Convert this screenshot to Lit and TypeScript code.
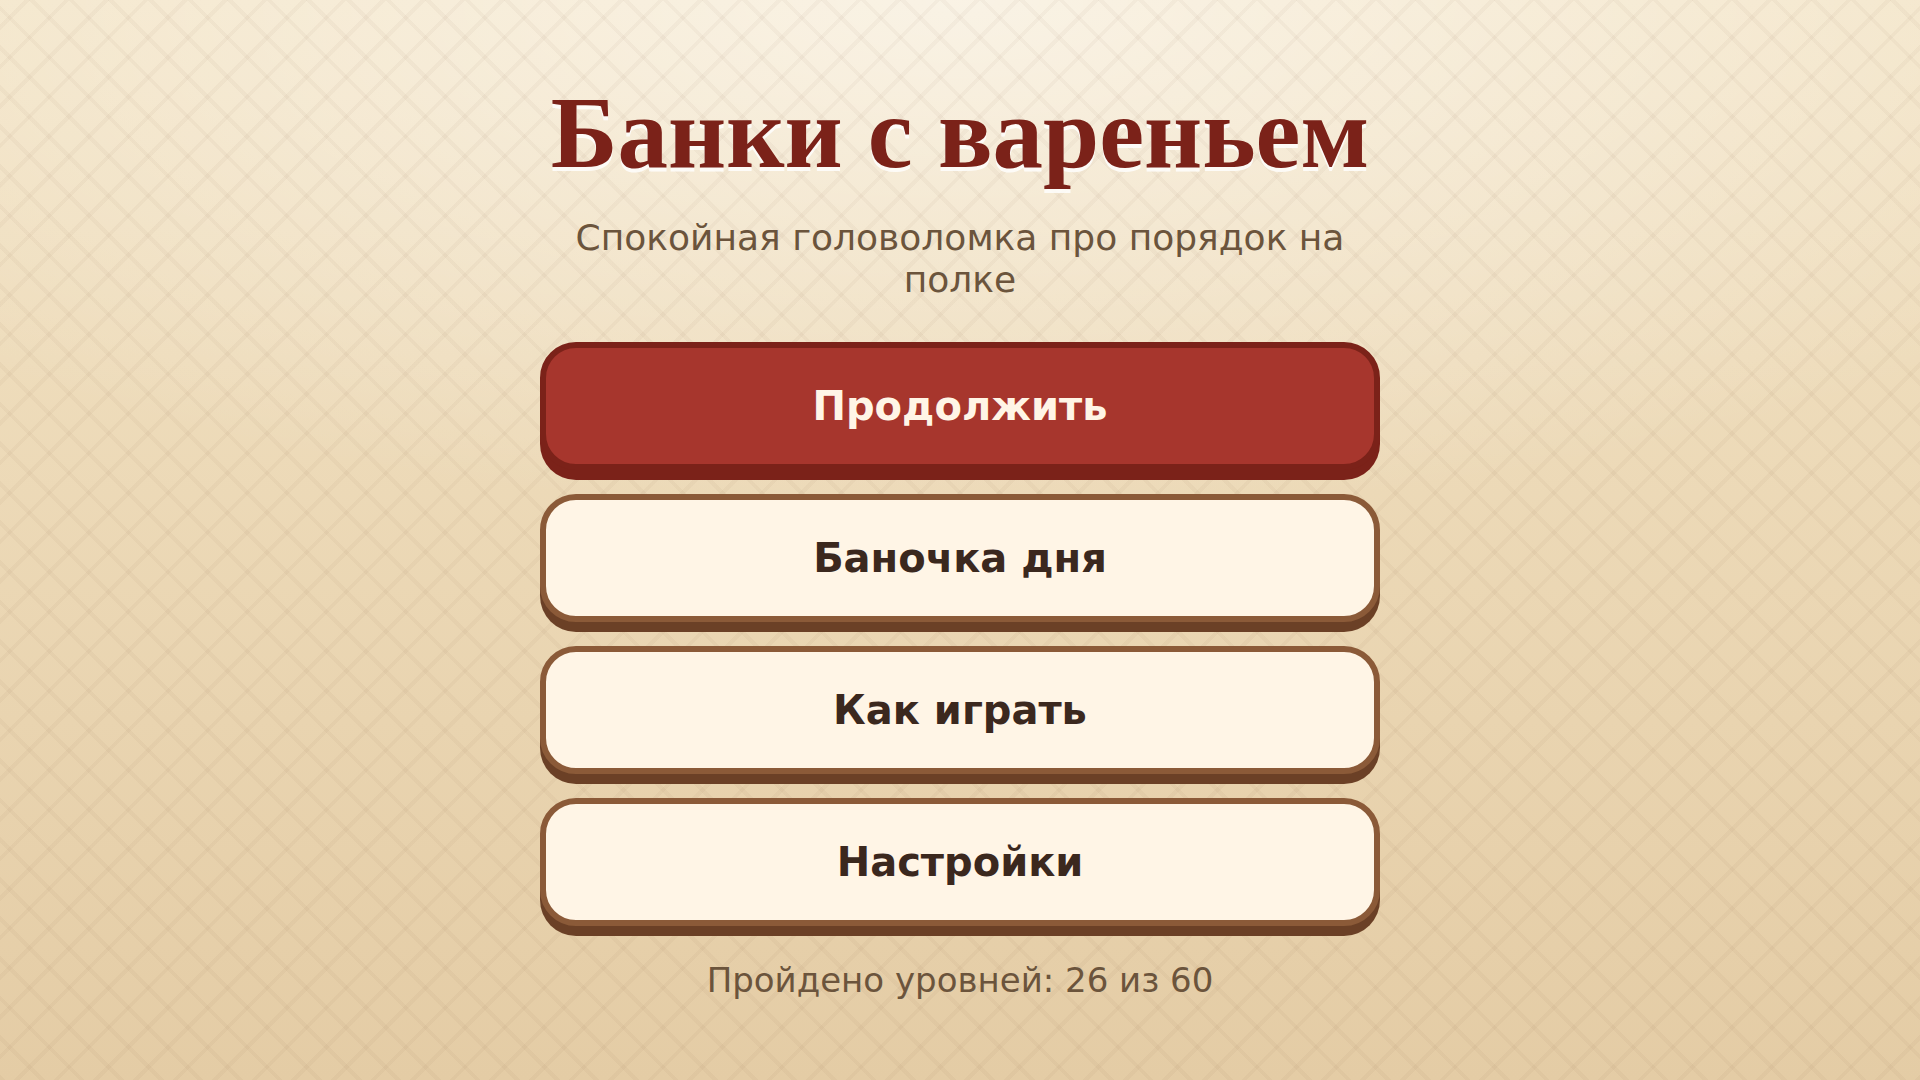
import { LitElement, html, css } from "lit";
import { customElement, property } from "lit/decorators.js";
import { classMap } from "lit/directives/class-map.js";

interface MenuItem {
  label: string;
  primary?: boolean;
}

@customElement("app-root")
export class AppRoot extends LitElement {
  static styles = css`
    :host {
      display: block;
      min-height: 100vh;
      font-family: "DejaVu Sans", sans-serif;
      color: #3b281e;
      background:
        repeating-linear-gradient(45deg, rgba(107, 64, 38, 0.04) 0 4px, transparent 4px 28px),
        repeating-linear-gradient(-45deg, rgba(107, 64, 38, 0.04) 0 4px, transparent 4px 28px),
        radial-gradient(120% 80% at 50% 0%, rgba(255, 255, 255, 0.55), transparent 60%),
        linear-gradient(#f3e4c6, #e4cca5);
    }
    .menu {
      box-sizing: border-box;
      min-height: 100vh;
      display: flex;
      flex-direction: column;
      align-items: center;
      justify-content: center;
      gap: 24px;
      padding: 24px 24px 28px;
      text-align: center;
    }
    .title {
      margin: 0 0 3px;
      font: bold 101px/114px "Liberation Serif", serif;
      color: #7b2219;
      text-shadow: 0 4px 0 rgba(255, 255, 255, 0.8);
    }
    .subtitle {
      margin: 0 0 17px;
      max-width: 840px;
      font-size: 36px;
      line-height: 42px;
      color: #6b543c;
    }
    .actions {
      width: 100%;
      max-width: 840px;
      display: flex;
      flex-direction: column;
      gap: 24px;
    }
    .button {
      box-sizing: border-box;
      min-height: 128px;
      border: 6px solid #8b5a38;
      border-radius: 36px;
      background: #fff5e6;
      box-shadow: 0 10px 0 #6b4026;
      color: inherit;
      font: bold 40px "DejaVu Sans", sans-serif;
      cursor: pointer;
    }
    .primary {
      border-color: #7b2219;
      background: #a7362d;
      box-shadow: 0 10px 0 #7b2219;
      color: #fff5e6;
    }
    .progress {
      margin: 10px 0 0;
      font-size: 34px;
      line-height: 40px;
      color: #6b543c;
    }
  `;

  @property({ type: Number }) done = 26;
  @property({ type: Number }) total = 60;

  private items: MenuItem[] = [
    { label: "Продолжить", primary: true },
    { label: "Баночка дня" },
    { label: "Как играть" },
    { label: "Настройки" },
  ];

  render() {
    return html`
      <main class="menu">
        <h1 class="title">Банки с вареньем</h1>
        <p class="subtitle">Спокойная головоломка про порядок на полке</p>
        <nav class="actions">
          ${this.items.map(
            (item) => html`<button
              type="button"
              class=${classMap({ button: true, primary: !!item.primary })}
            >${item.label}</button>`
          )}
        </nav>
        <p class="progress">Пройдено уровней: ${this.done} из ${this.total}</p>
      </main>
    `;
  }
}
